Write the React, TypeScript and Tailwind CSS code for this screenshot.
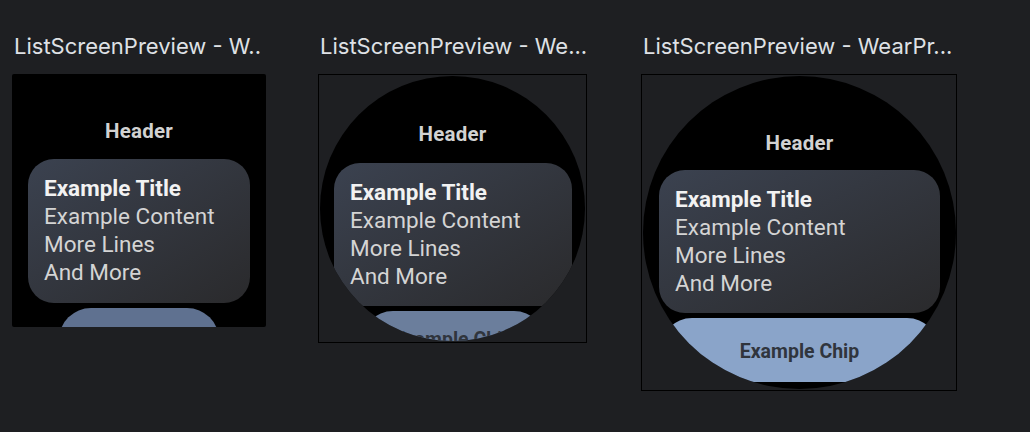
import React from 'react';

interface PreviewProps {
  title: string;
  frameClass: string;
  screenClass: string;
  headerPad: string;
  cardClass: string;
  chipClass: string;
  chipLabel?: boolean;
  showNextChip?: boolean;
}

const cardLines = ['Example Content', 'More Lines', 'And More'];

// One watch screen: header, a content card and the chip list below it
const WatchScreen: React.FC<Omit<PreviewProps, 'title' | 'frameClass'>> = ({
  screenClass,
  headerPad,
  cardClass,
  chipClass,
  chipLabel = true,
  showNextChip,
}) => (
  <div className={`flex flex-col overflow-hidden bg-black font-['Roboto',sans-serif] ${screenClass}`}>
    <div className={`text-center text-[20.5px] font-bold leading-[24px] tracking-[0.2px] text-[#d2d2d2] ${headerPad}`}>
      Header
    </div>
    <div
      className={`shrink-0 rounded-[26px] bg-linear-to-br from-[#3b4250] to-[#2a2a2c] px-[16px] pt-[15px] ${cardClass}`}
    >
      <div className="text-[22.5px] font-bold leading-[28px] text-[#f2f2f2]">Example Title</div>
      {cardLines.map((line) => (
        <div key={line} className="text-[22.5px] leading-[28px] text-[#d4d4d4]">
          {line}
        </div>
      ))}
    </div>
    <div
      className={`mt-[5px] flex h-[64px] shrink-0 items-center justify-center rounded-[32px] text-[19.5px] font-bold text-[#30353d] ${chipClass}`}
    >
      {chipLabel && 'Example Chip'}
    </div>
    {showNextChip && (
      <div className="mx-auto mt-[7px] h-[40px] w-[279px] shrink-0 rounded-[32px] bg-[#7890b4]" />
    )}
  </div>
);

const Preview: React.FC<PreviewProps> = ({ title, frameClass, ...screen }) => (
  <div className="flex shrink-0 flex-col">
    <div className="h-[28px] whitespace-nowrap pl-[2px] font-['Inter',sans-serif] text-[22px] leading-[28px] text-[#dfe1e5]">
      {title}
    </div>
    <div className={`mt-[14px] ${frameClass}`}>
      <WatchScreen {...screen} />
    </div>
  </div>
);

export default function App() {
  return (
    <div className="flex h-[432px] w-full items-start overflow-hidden bg-[#1e1f22] pl-[12px] pt-[32px]">
      <div className="w-[254px]">
        <Preview
          title="ListScreenPreview - W.."
          frameClass="w-[254px]"
          screenClass="h-[253px] w-[254px] rounded-[2px]"
          headerPad="pt-[45px] mb-[16px]"
          cardClass="mx-[16px] h-[144px]"
          chipClass="mx-auto w-[160px] bg-[#5f7190]"
          chipLabel={false}
        />
      </div>
      <div className="ml-[52px] w-[269px]">
        <Preview
          title="ListScreenPreview - We..."
          frameClass="h-[269px] w-[269px] border border-black p-px"
          screenClass="h-[265px] w-[265px] rounded-full"
          headerPad="pt-[46px] mb-[17px]"
          cardClass="ml-[14px] w-[238px] h-[143px]"
          chipClass="ml-[41px] w-[185px] bg-[#6b7e9c] pb-[6px]"
        />
      </div>
      <div className="ml-[54px] w-[316px]">
        <Preview
          title="ListScreenPreview - WearPr..."
          frameClass="h-[317px] w-[316px] border border-black p-px"
          screenClass="h-[313px] w-[313px] rounded-full"
          headerPad="pt-[55px] mb-[15px]"
          cardClass="ml-[16px] w-[281px] h-[143px]"
          chipClass="ml-[17px] w-[279px] bg-[#8aa4c9] pt-[4px]"
          showNextChip
        />
      </div>
    </div>
  );
}
